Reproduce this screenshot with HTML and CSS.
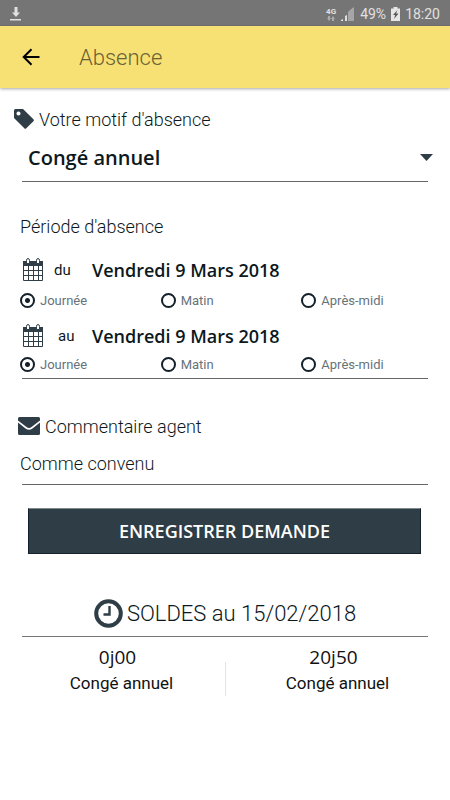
FILE: index.html
```html
<!DOCTYPE html>
<html lang="fr">
<head>
  <meta charset="UTF-8" />
  <meta name="viewport" content="width=device-width, initial-scale=1.0"/>
  <title>Absence</title>
  <link rel="stylesheet" href="styles.css">
</head>
<body>
  <div class="status-bar">
    <svg class="download-icon" width="12" height="16" viewBox="0 0 12 16" fill="#e0e0e0">
      <path d="M4.500 1h3v5.500h2.500L6 11 2 6.500h2.500zM0 13h11v1.500H0z"/>
    </svg>
    <span class="network">4G
      <svg width="8" height="5" viewBox="0 0 8 5" fill="#aaa">
        <path d="M1 0h2v2h1L2 5 0 2h1zM5 5h2V3h1L6 0 4 3h1z"/>
      </svg>
    </span>
    <svg width="14" height="14" viewBox="0 0 14 14">
      <path fill="#e0e0e0" d="M0 14v-1l2-1v2zM4 14V9l2-1v6z"/>
      <path fill="#a6a6a6" d="M7 14V5l2-2v11zM9 14V3l4-3v14z"/>
    </svg>
    <span>49%</span>
    <svg width="9" height="14" viewBox="0 0 9 14">
      <path fill="#e6e6e6" d="M2.500 0h4v1.500H9V14H0V1.500h2.500z"/>
      <path fill="#555" d="M6.500 3L2 8h2.200L3 12l4.500-5.500H5z"/>
    </svg>
    <span>18:20</span>
  </div>

  <header class="app-bar">
    <button type="button" class="back-button" aria-label="Retour">
      <svg width="18" height="18" viewBox="0 0 18 18" fill="none" stroke="#000" stroke-width="2">
        <path d="M17.500 9H2M9.500 1.200L1.700 9l7.800 7.800"/>
      </svg>
    </button>
    <h1>Absence</h1>
  </header>

  <form class="content">
    <section class="block reason">
      <label class="block-title" for="reason">
        <svg width="20" height="20" viewBox="0 0 20 20" fill="#2f3d46">
          <path fill-rule="evenodd" d="M1.500 0H9l10.400 10.300q1 1 0 2L12.300 19.300q-1 1-2 0L0 9V1.500Q0 0 1.500 0zM4.500 2.500a2 2 0 1 0 .01 0z"/>
        </svg>
        Votre motif d'absence
      </label>
      <div class="select-box">
        <select id="reason">
          <option>Congé annuel</option>
        </select>
        <svg width="13" height="7" viewBox="0 0 13 7" fill="#2f3d46"><path d="M0 0h13L6.500 7z"/></svg>
      </div>
    </section>

    <section class="block period">
      <h2 class="period-title">Période d'absence</h2>

      <div class="date-row">
        <svg width="22" height="24" viewBox="0 0 22 24">
          <path fill="#fff" stroke="#2f3d46" d="M1.500 5.500h19v17h-19z"/>
          <path fill="#2f3d46" d="M1 3h20v5H1z"/>
          <path fill="none" stroke="#2f3d46" d="M6.500 8v14.500M11.500 8v14.500M16.500 8v14.500M1 12.500h20M1 17.500h20"/>
          <path fill="#fff" stroke="#2f3d46" d="M4.500 2.500q0-2 1.500-2t1.500 2v3h-3zM14.500 2.500q0-2 1.500-2t1.500 2v3h-3z"/>
        </svg>
        <label for="date-from">du</label>
        <button type="button" class="date" id="date-from">Vendredi 9 Mars 2018</button>
      </div>
      <div class="choices">
        <label><input type="radio" name="from" checked>Journée</label>
        <label><input type="radio" name="from">Matin</label>
        <label><input type="radio" name="from">Après-midi</label>
      </div>

      <div class="date-row">
        <svg width="22" height="24" viewBox="0 0 22 24">
          <path fill="#fff" stroke="#2f3d46" d="M1.500 5.500h19v17h-19z"/>
          <path fill="#2f3d46" d="M1 3h20v5H1z"/>
          <path fill="none" stroke="#2f3d46" d="M6.500 8v14.500M11.500 8v14.500M16.500 8v14.500M1 12.500h20M1 17.500h20"/>
          <path fill="#fff" stroke="#2f3d46" d="M4.500 2.500q0-2 1.500-2t1.500 2v3h-3zM14.500 2.500q0-2 1.500-2t1.500 2v3h-3z"/>
        </svg>
        <label class="to-label" for="date-to">au</label>
        <button type="button" class="date" id="date-to">Vendredi 9 Mars 2018</button>
      </div>
      <div class="choices">
        <label><input type="radio" name="to" checked>Journée</label>
        <label><input type="radio" name="to">Matin</label>
        <label><input type="radio" name="to">Après-midi</label>
      </div>
    </section>

    <section class="block comment">
      <label class="block-title" for="comment">
        <svg width="22" height="18" viewBox="0 0 22 18" fill="#2f3d46">
          <path d="M1.500 0h19Q22 0 22 1.500v2L13.500 10q-2.500 2-5 0L0 3.500v-2Q0 0 1.500 0z"/>
          <path d="M0 5.500l7.500 6q3.500 2.500 7 0l7.500-6v11q0 1.500-1.500 1.500h-19Q0 18 0 16.500z"/>
        </svg>
        Commentaire agent
      </label>
      <input type="text" id="comment" value="Comme convenu">
    </section>

    <button type="submit" class="save-button">ENREGISTRER DEMANDE</button>
  </form>

  <section class="balances">
    <h2>
      <svg width="29" height="29" viewBox="0 0 29 29" fill="none" stroke="#2f3d46">
        <circle cx="14.500" cy="14.500" r="12.300" stroke-width="4"/>
        <path stroke-width="2.400" d="M15.500 7v8.500H9.500"/>
      </svg>
      SOLDES au 15/02/2018
    </h2>
    <div class="balance-list">
      <div class="balance">
        <span class="amount">0j00</span>
        <span>Congé annuel</span>
      </div>
      <div class="balance">
        <span class="amount">20j50</span>
        <span>Congé annuel</span>
      </div>
    </div>
  </section>
</body>
</html>
```
FILE: styles.css
```css
* {
  box-sizing: border-box;
}

body {
  margin: 0;
  background: #fff;
  color: #0c1820;
  font-family: Roboto, sans-serif;
  font-size: 18px;
}

h1,
h2 {
  margin: 0;
  font-weight: 350;
}

button,
select,
input {
  margin: 0;
  padding: 0;
  border: none;
  background: none;
  color: inherit;
  font-family: inherit;
}

svg {
  flex: none;
}

/* Status bar */
.status-bar {
  display: flex;
  align-items: center;
  gap: 5px;
  height: 26px;
  padding: 2px 10px 0;
  background: #757575;
  color: #e0e0e0;
  font-size: 14px;
}

.download-icon {
  margin-right: auto;
}

.network {
  display: flex;
  flex-direction: column;
  align-items: center;
  font-size: 8px;
  font-weight: bold;
  line-height: 9px;
}

/* App bar */
.app-bar {
  display: flex;
  align-items: center;
  height: 62px;
  padding: 0 22px;
  background: #f7e175;
  box-shadow: 0 1px 3px rgba(0, 0, 0, 0.35);
}

.back-button {
  display: flex;
  width: 57px;
}

.app-bar h1 {
  color: #6b6233;
  font-size: 22px;
}

/* Form */
.content {
  padding: 19px 22px 0;
}

.block {
  border-bottom: 1px solid #666;
}

.block-title {
  display: flex;
  align-items: center;
  gap: 5px;
  height: 24px;
  margin-left: -8px;
  font-weight: 350;
}

.select-box {
  display: flex;
  align-items: center;
  height: 50px;
  margin-right: -5px;
  padding: 3px 0 0 6px;
}

.select-box select {
  flex: 1;
  appearance: none;
  font-family: "Open Sans", sans-serif;
  font-size: 20px;
  font-weight: 650;
}

.period {
  padding-top: 32px;
}

.period-title {
  margin: 0 0 15px -2px;
  font-size: 18px;
  line-height: 26px;
}

.date-row {
  display: flex;
  align-items: center;
  height: 30px;
  font-size: 15px;
}

.date-row label {
  width: 48px;
  padding-left: 10px;
}

.date-row .to-label {
  padding-left: 14px;
}

.date {
  font-family: "Open Sans", sans-serif;
  font-size: 18px;
  font-weight: 650;
}

.choices {
  display: grid;
  grid-template-columns: repeat(3, 1fr);
  height: 30px;
  margin: 0 -14px 6px -2px;
}

.choices:last-child {
  height: 27px;
  margin-bottom: 0;
}

.choices label {
  display: flex;
  align-items: center;
  gap: 5px;
  color: #66737b;
  font-size: 13px;
}

.choices input {
  appearance: none;
  width: 15px;
  height: 15px;
  border: 2px solid #14212b;
  border-radius: 50%;
}

.choices input:checked {
  background: radial-gradient(circle, #14212b 2px, #fff 3px);
}

.comment {
  padding-top: 35px;
}

.comment .block-title {
  margin-left: -4px;
}

.comment input {
  width: 100%;
  height: 46px;
  margin-left: -2px;
  padding-top: 4px;
  font-size: 18px;
  font-weight: 350;
}

.save-button {
  display: block;
  width: calc(100% - 13px);
  height: 46px;
  margin: 23px 0 0 6px;
  background: #2f3d46;
  border: 1px solid #14212b;
  border-top-color: #82898d;
  color: #fff;
  font-family: "Open Sans", sans-serif;
  font-size: 18px;
  font-weight: 650;
}

/* Balances */
.balances {
  padding: 36px 22px 0;
}

.balances h2 {
  display: flex;
  align-items: center;
  justify-content: center;
  gap: 4px;
  height: 47px;
  border-bottom: 1px solid #777;
  font-size: 22px;
}

.balance-list {
  display: grid;
  grid-template-columns: 1fr 1fr;
  margin: 0 -22px;
  padding-top: 7px;
  background: linear-gradient(#e4e4e4, #e4e4e4) center bottom / 1px 34px no-repeat;
}

.balance {
  display: flex;
  flex-direction: column;
  align-items: center;
  color: #111;
  font-size: 17px;
  line-height: 26px;
}

.balance:first-child {
  padding-left: 18px;
}

.amount {
  padding-right: 8px;
  font-family: "Open Sans", sans-serif;
  font-size: 19px;
}
```
